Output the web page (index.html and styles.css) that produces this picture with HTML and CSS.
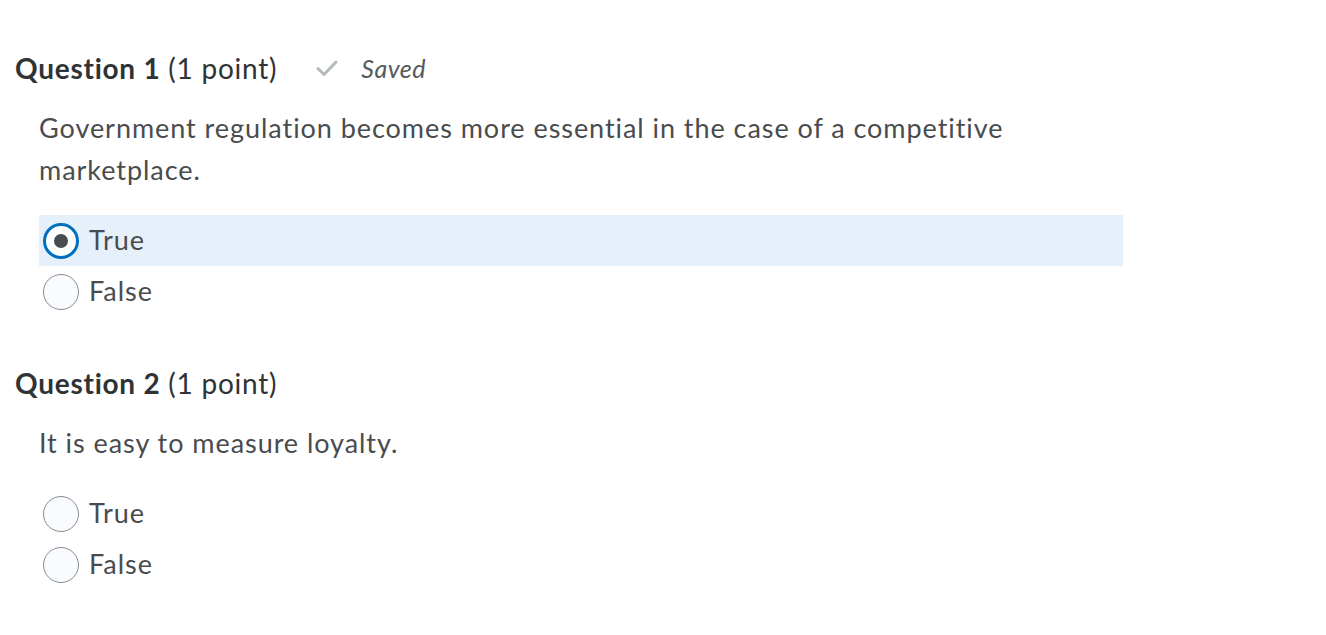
FILE: index.html
```html
<!DOCTYPE html>
<html lang="en">
<head>
<meta charset="utf-8">
<title>Quiz</title>
<link rel="stylesheet" href="styles.css">
</head>
<body>
<main class="quiz">
  <section class="question">
    <div class="q-head">
      <h2 class="q-title"><strong>Question 1</strong> (1 point)</h2>
      <span class="saved">
        <svg class="check" viewBox="0 0 24 24" width="24" height="24" aria-hidden="true"><path d="M3 12.5l6 6L21 6" fill="none" stroke="#b4b9bd" stroke-width="3" stroke-linecap="round" stroke-linejoin="round"/></svg>
        <em>Saved</em>
      </span>
    </div>
    <p class="q-text">Government regulation becomes more essential in the case of a competitive marketplace.</p>
    <ul class="options">
      <li class="option selected"><span class="radio checked"></span><span class="label">True</span></li>
      <li class="option"><span class="radio"></span><span class="label">False</span></li>
    </ul>
  </section>
  <section class="question">
    <div class="q-head">
      <h2 class="q-title"><strong>Question 2</strong> (1 point)</h2>
    </div>
    <p class="q-text">It is easy to measure loyalty.</p>
    <ul class="options">
      <li class="option"><span class="radio"></span><span class="label">True</span></li>
      <li class="option"><span class="radio"></span><span class="label">False</span></li>
    </ul>
  </section>
</main>
</body>
</html>
```
FILE: styles.css
```css
html, body { margin: 0; padding: 0; background: #fff; }
body { font-family: Lato, "Noto Sans", sans-serif; color: #494c4e; font-variant-ligatures: none; }
.quiz { padding: 46px 0 0 15px; width: 1108px; }
.question { margin-bottom: 44px; }
.q-head { display: flex; align-items: center; gap: 38px; height: 44px; }
.q-title { margin: 0; font-size: 28px; font-weight: 400; color: #303335; letter-spacing: 0.75px; }
.q-title strong { font-weight: 700; }
.saved { display: flex; align-items: center; gap: 22px; color: #565a5c; font-size: 25px; letter-spacing: 0.5px; }
.saved em { font-style: italic; }
.check { display: block; }
.q-text { margin: 17px 0 0 24px; font-size: 27px; line-height: 42px; letter-spacing: 0.95px; max-width: 1000px; }
.options { list-style: none; margin: 24px 0 0 24px; padding: 0; }
.option { display: flex; align-items: center; height: 51px; gap: 10px; padding-left: 4px; }
.option.selected { background: #e6f0fb; }
.radio { width: 36px; height: 36px; border: 1px solid #868c8f; border-radius: 50%; background: #f9fbff; box-sizing: border-box; flex: none; position: relative; }
.radio.checked { border: 3px solid #006fbf; background: #fff; }
.radio.checked::after { content: ""; position: absolute; left: 50%; top: 50%; width: 14px; height: 14px; margin: -7px 0 0 -7px; border-radius: 50%; background: #494c4e; }
.label { font-size: 27px; letter-spacing: 0.95px; padding-bottom: 3px; }
```
